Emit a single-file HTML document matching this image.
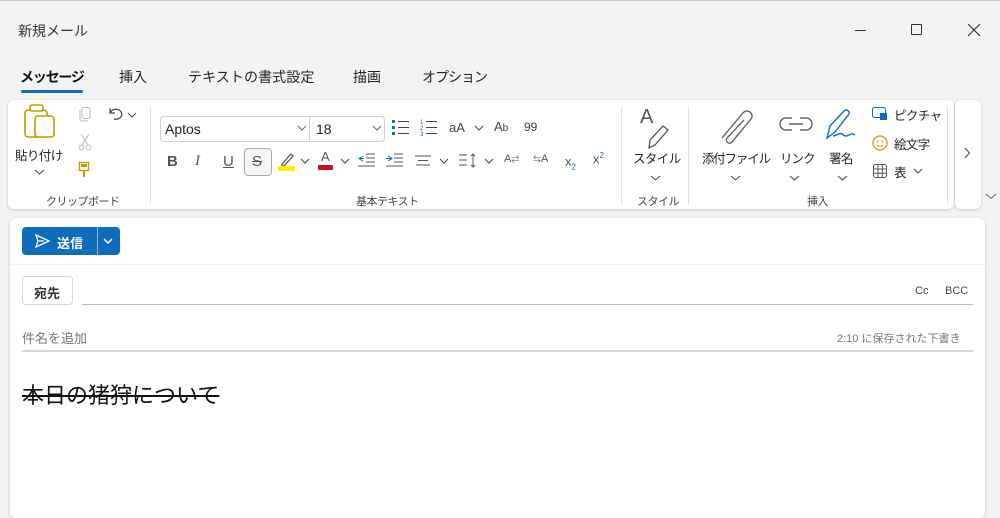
<!DOCTYPE html>
<html><head><meta charset="utf-8"><style>
*{margin:0;padding:0;box-sizing:border-box}
body{width:1000px;height:502px;background:#f3f3f3;font-family:"Liberation Sans","Noto Sans CJK JP",sans-serif;color:#242424;position:relative;overflow:hidden}
.a{position:absolute;white-space:nowrap}
.card{position:absolute;background:#fff;border-radius:6px;box-shadow:0 1px 3px rgba(0,0,0,.18)}
.sep{position:absolute;width:1px;background:#e0e0e0}
.lbl{font-size:11px;color:#444;letter-spacing:-.5px}
.rt{font-size:12.5px;letter-spacing:-.6px}
svg{position:absolute;overflow:visible}
</style></head><body>
<div class="a" style="left:0;top:0;width:1000px;height:1px;background:#ccc"></div>
<div class="a" style="left:18px;top:21px;font-size:14px;color:#333">新規メール</div>
<div class="a" style="left:855px;top:30px;width:11px;height:1px;background:#333"></div>
<div class="a" style="left:911px;top:24px;width:11px;height:11px;border:1px solid #333;border-radius:1px"></div>
<svg style="left:968px;top:24px" width="12" height="12"><path d="M0 0L12 12M12 0L0 12" stroke="#333" stroke-width="1.1"/></svg>

<div class="a" style="left:20px;top:67px;font-size:14px;font-weight:bold;color:#111;letter-spacing:-1.2px">メッセージ</div>
<div class="a" style="left:21px;top:90px;width:62px;height:3px;background:#0f6cbd;border-radius:2px"></div>
<div class="a" style="left:119px;top:67px;font-size:14px">挿入</div>
<div class="a" style="left:188px;top:67px;font-size:14px;letter-spacing:.1px">テキストの書式設定</div>
<div class="a" style="left:353px;top:67px;font-size:14px">描画</div>
<div class="a" style="left:422px;top:67px;font-size:14px;letter-spacing:-1px">オプション</div>

<div class="card" style="left:8px;top:100px;width:946px;height:109px"></div>
<div class="card" style="left:955px;top:100px;width:26px;height:109px"></div>
<div class="sep" style="left:150px;top:106px;height:98px"></div>
<div class="sep" style="left:621px;top:106px;height:98px"></div>
<div class="sep" style="left:688px;top:106px;height:98px"></div>
<div class="sep" style="left:947px;top:106px;height:98px"></div>

<!-- clipboard -->
<svg style="left:24px;top:104px" width="34" height="34"><rect x="1" y="6" width="22" height="27" rx="3" fill="none" stroke="#c19c00" stroke-width="1.6"/><rect x="11" y="12" width="19" height="21" rx="3" fill="#fff" stroke="#c19c00" stroke-width="1.6"/><rect x="6" y="1" width="13" height="6" rx="2" fill="#fff" stroke="#c19c00" stroke-width="1.6"/></svg>
<div class="a rt" style="left:15px;top:145px">貼り付け</div>
<svg style="left:35px;top:170px" width="9" height="5"><path d="M0 0L4.5 4L9 0" fill="none" stroke="#444"/></svg>
<div class="a lbl" style="left:46px;top:193px">クリップボード</div>
<svg style="left:79px;top:107px" width="12" height="15"><rect x="3" y="0.5" width="8" height="11" rx="2" fill="none" stroke="#bbb"/><path d="M1 3v9a2 2 0 0 0 2 2h6" fill="none" stroke="#bbb"/></svg>
<svg style="left:78px;top:134px" width="14" height="17"><path d="M3 0L10 11M11 0L4 11" stroke="#bbb"/><circle cx="3.5" cy="13.5" r="2.5" fill="none" stroke="#bbb"/><circle cx="10.5" cy="13.5" r="2.5" fill="none" stroke="#bbb"/></svg>
<svg style="left:79px;top:162px" width="10" height="16"><rect x="0.5" y="0.5" width="9" height="8" fill="none" stroke="#c19c00" stroke-width="1.3"/><rect x="2" y="2" width="6" height="3" fill="#c19c00"/><path d="M5 9v6" stroke="#c19c00" stroke-width="2"/></svg>
<svg style="left:107px;top:106px" width="14" height="14"><path d="M3 2v5h5M3 7a6 5 0 1 1 4 6" fill="none" stroke="#444" stroke-width="1.2"/></svg>
<svg style="left:128px;top:113px" width="8" height="5"><path d="M0 0L4 4L8 0" fill="none" stroke="#444"/></svg>

<!-- basic text -->
<div class="a" style="left:160px;top:116px;width:225px;height:26px;border:1px solid #d1d1d1;border-radius:4px"></div>
<div class="sep" style="left:309px;top:117px;height:24px;background:#d1d1d1"></div>
<div class="a" style="left:165px;top:121px;font-size:14px">Aptos</div>
<div class="a" style="left:316px;top:121px;font-size:14px">18</div>
<svg style="left:298px;top:126px" width="8" height="5"><path d="M0 0L4 4L8 0" fill="none" stroke="#666"/></svg>
<svg style="left:373px;top:126px" width="8" height="5"><path d="M0 0L4 4L8 0" fill="none" stroke="#666"/></svg>
<svg style="left:392px;top:120px" width="18" height="16"><g fill="#0f6cbd"><rect x="0" y="0" width="3" height="3"/><rect x="0" y="6" width="3" height="3"/><rect x="0" y="12" width="3" height="3"/></g><path d="M6 1.5h11M6 7.5h11M6 13.5h11" stroke="#444"/></svg>
<svg style="left:420px;top:118px" width="18" height="18"><text x="0" y="6" font-size="6" fill="#0f6cbd">1</text><text x="0" y="12" font-size="6" fill="#0f6cbd">2</text><text x="0" y="18" font-size="6" fill="#0f6cbd">3</text><path d="M6 3.5h11M6 9.5h11M6 15.5h11" stroke="#444"/></svg>
<div class="a" style="left:449px;top:120px;font-size:13px;color:#444">aA</div>
<svg style="left:475px;top:126px" width="8" height="5"><path d="M0 0L4 4L8 0" fill="none" stroke="#444"/></svg>
<div class="a" style="left:494px;top:119px;font-size:13px;color:#444">A<span style="font-size:10px">b</span></div>
<div class="a" style="left:524px;top:120px;font-size:12px;color:#444">99</div>

<div class="a" style="left:167px;top:153px;font-size:15px;font-weight:bold;color:#555">B</div>
<div class="a" style="left:195px;top:153px;font-size:15px;font-style:italic;color:#555;font-family:'Liberation Serif',serif">I</div>
<div class="a" style="left:223px;top:153px;font-size:15px;color:#555;text-decoration:underline">U</div>
<div class="a" style="left:244px;top:148px;width:28px;height:28px;border:1px solid #aaa;border-radius:4px;background:#f5f5f5"></div>
<div class="a" style="left:252px;top:153px;font-size:15px;color:#555;text-decoration:line-through">S</div>
<svg style="left:278px;top:150px" width="18" height="22"><path d="M4 14L13 4l2 2-9 10H4z" fill="none" stroke="#555" stroke-width="1.2"/><rect x="0" y="16" width="17" height="5" rx="1" fill="#ffea00"/></svg>
<svg style="left:301px;top:159px" width="8" height="5"><path d="M0 0L4 4L8 0" fill="none" stroke="#444"/></svg>
<div class="a" style="left:321px;top:149px;font-size:13px;color:#555">A</div>
<div class="a" style="left:318px;top:165px;width:15px;height:5px;background:#c50f1f;border-radius:1px"></div>
<svg style="left:341px;top:159px" width="8" height="5"><path d="M0 0L4 4L8 0" fill="none" stroke="#444"/></svg>
<svg style="left:358px;top:153px" width="18" height="14"><path d="M8 1h9M8 5h9M8 9h9M0 13h17" stroke="#555"/><path d="M5 3L1 5.5L5 8M1 5.5h5" fill="none" stroke="#0f6cbd"/></svg>
<svg style="left:386px;top:153px" width="18" height="14"><path d="M8 1h9M8 5h9M8 9h9M0 13h17" stroke="#555"/><path d="M2 3L6 5.5L2 8M0 5.5h6" fill="none" stroke="#0f6cbd"/></svg>
<svg style="left:415px;top:155px" width="16" height="11"><path d="M0 1h16M3 5.5h10M1 10h14" stroke="#555"/></svg>
<svg style="left:440px;top:159px" width="8" height="5"><path d="M0 0L4 4L8 0" fill="none" stroke="#444"/></svg>
<svg style="left:459px;top:153px" width="18" height="15"><path d="M0 2h8M0 7h8M0 12h8M14 1v13M12 3l2-2 2 2M12 12l2 2 2-2" fill="none" stroke="#555"/></svg>
<svg style="left:485px;top:159px" width="8" height="5"><path d="M0 0L4 4L8 0" fill="none" stroke="#444"/></svg>
<div class="a" style="left:504px;top:153px;font-size:11px;color:#555">A<span style="font-size:8px">⇄</span></div>
<div class="a" style="left:533px;top:153px;font-size:11px;color:#555"><span style="font-size:8px">⇆</span>A</div>
<div class="a" style="left:565px;top:154px;font-size:13px;color:#555">x<sub style="font-size:8px;color:#0f6cbd">2</sub></div>
<div class="a" style="left:593px;top:151px;font-size:13px;color:#555">x<sup style="font-size:8px;color:#0f6cbd">2</sup></div>
<div class="a lbl" style="left:356px;top:193px">基本テキスト</div>

<!-- styles -->
<div class="a" style="left:640px;top:106px;font-size:20px;color:#555">A</div>
<svg style="left:645px;top:118px" width="28" height="34"><path d="M4 30l1-8L18 8l5 4L10 27z" fill="none" stroke="#555" stroke-width="1.3"/></svg>
<div class="a rt" style="left:633px;top:148px">スタイル</div>
<svg style="left:651px;top:176px" width="9" height="5"><path d="M0 0L4.5 4L9 0" fill="none" stroke="#444"/></svg>
<div class="a lbl" style="left:637px;top:193px">スタイル</div>

<!-- insert -->
<svg style="left:716px;top:108px" width="40" height="38"><path d="M6 30L27 5a5 5 0 0 1 8 6L16 34a3 3 0 0 1-5-4L28 12" fill="none" stroke="#666" stroke-width="1.4"/></svg>
<div class="a rt" style="left:702px;top:148px;letter-spacing:-1.2px">添付ファイル</div>
<svg style="left:731px;top:176px" width="9" height="5"><path d="M0 0L4.5 4L9 0" fill="none" stroke="#444"/></svg>
<svg style="left:779px;top:116px" width="34" height="16"><path d="M13 2H7a6 6 0 0 0 0 12h6M21 2h6a6 6 0 0 1 0 12h-6M10 8h14" fill="none" stroke="#666" stroke-width="1.4"/></svg>
<div class="a rt" style="left:780px;top:148px;letter-spacing:-1px">リンク</div>
<svg style="left:790px;top:176px" width="9" height="5"><path d="M0 0L4.5 4L9 0" fill="none" stroke="#444"/></svg>
<svg style="left:825px;top:108px" width="36" height="34"><path d="M2 30L5 18L19 3a3 3 0 0 1 5 3L10 24zM8 28c4 0 6-4 9-2s3 3 7 1 4-1 6 0" fill="none" stroke="#0f6cbd" stroke-width="1.4"/></svg>
<div class="a rt" style="left:829px;top:148px">署名</div>
<svg style="left:838px;top:176px" width="9" height="5"><path d="M0 0L4.5 4L9 0" fill="none" stroke="#444"/></svg>
<svg style="left:872px;top:107px" width="16" height="14"><rect x="0.5" y="0.5" width="13" height="10" rx="2" fill="none" stroke="#0f6cbd"/><rect x="8" y="6" width="7" height="7" fill="#0f6cbd"/></svg>
<div class="a rt" style="left:894px;top:105px">ピクチャ</div>
<svg style="left:872px;top:135px" width="16" height="16"><circle cx="8" cy="8" r="7" fill="none" stroke="#c19c00" stroke-width="1.2"/><circle cx="5.5" cy="6.5" r=".9" fill="#c19c00"/><circle cx="10.5" cy="6.5" r=".9" fill="#c19c00"/><path d="M5 10q3 2.5 6 0" fill="none" stroke="#c19c00"/></svg>
<div class="a rt" style="left:894px;top:134px">絵文字</div>
<svg style="left:873px;top:164px" width="14" height="14"><rect x="0.5" y="0.5" width="13" height="13" rx="2" fill="none" stroke="#555"/><path d="M0 5h14M0 9.3h14M5 0v14M9.3 0v14" stroke="#555"/></svg>
<div class="a rt" style="left:894px;top:162px">表</div>
<svg style="left:914px;top:169px" width="8" height="5"><path d="M0 0L4 4L8 0" fill="none" stroke="#444"/></svg>
<div class="a lbl" style="left:807px;top:193px">挿入</div>
<svg style="left:965px;top:148px" width="5" height="10"><path d="M0 0L4.5 5L0 10" fill="none" stroke="#444"/></svg>
<svg style="left:986px;top:194px" width="10" height="5"><path d="M0 0L5 4.5L10 0" fill="none" stroke="#666"/></svg>

<!-- compose -->
<div class="card" style="left:10px;top:218px;width:975px;height:300px;border-radius:6px"></div>
<div class="a" style="left:10px;top:264px;width:975px;height:1px;background:#f0f0f0"></div>
<div class="a" style="left:22px;top:227px;width:98px;height:28px;background:#0f6cbd;border-radius:4px"></div>
<div class="a" style="left:97px;top:227px;width:1px;height:28px;background:#8cb4e0"></div>
<svg style="left:35px;top:234px" width="15" height="14"><path d="M1 1L14 7L1 13L3 7zM3 7h6" fill="none" stroke="#fff" stroke-width="1.3"/></svg>
<div class="a" style="left:57px;top:233px;font-size:13px;color:#fff;font-weight:bold">送信</div>
<svg style="left:104px;top:239px" width="8" height="5"><path d="M0 0L4 4L8 0" fill="none" stroke="#fff" stroke-width="1.4"/></svg>

<div class="a" style="left:22px;top:276px;width:51px;height:29px;border:1px solid #d6d6d6;border-radius:4px"></div>
<div class="a" style="left:34px;top:283px;font-size:13px;font-weight:bold;color:#333">宛先</div>
<div class="a" style="left:82px;top:304px;width:891px;height:1px;background:#bdbdbd"></div>
<div class="a" style="left:915px;top:285px;font-size:11px;color:#444">Cc</div>
<div class="a" style="left:945px;top:285px;font-size:11px;color:#444">BCC</div>
<div class="a" style="left:22px;top:328px;font-size:13px;color:#777">件名を追加</div>
<div class="a" style="left:837px;top:330px;font-size:11px;color:#777">2:10 に保存された下書き</div>
<div class="a" style="left:22px;top:350px;width:951px;height:2px;background:#d6d6d6"></div>
<div class="a" style="left:22px;top:378px;font-size:22px;color:#111;text-decoration:line-through">本日の猪狩について</div>
</body></html>
